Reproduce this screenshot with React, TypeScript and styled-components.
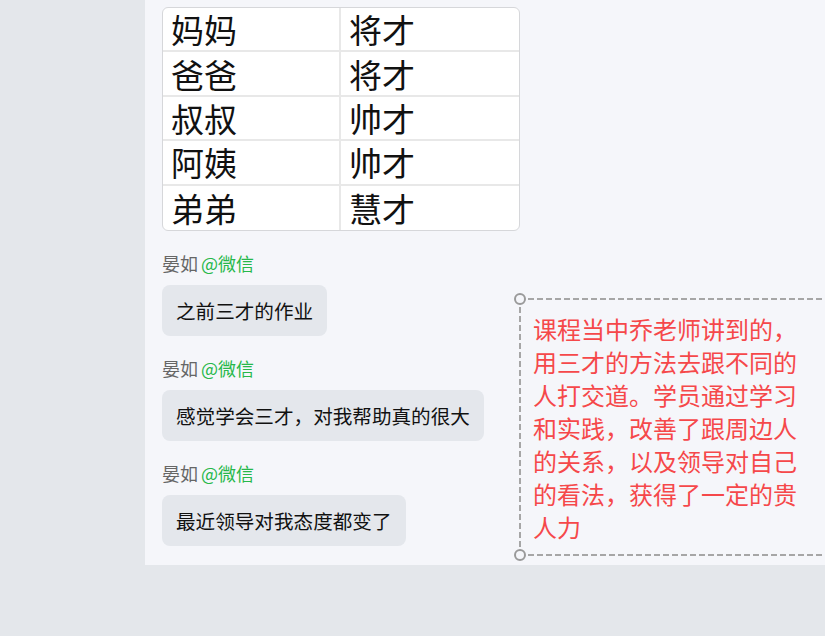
import React from "react"
import styled, { createGlobalStyle } from "styled-components"

const GlobalStyle = createGlobalStyle`
html, body {
  margin: 0;
  padding: 0;
  height: 100%;
  background: #e4e7eb;
  overflow: hidden;
}
#root {
  width: 825px;
  height: 636px;
  overflow: hidden;
}
* { box-sizing: border-box; }
`

const Page = styled.div`
width: 825px;
height: 636px;
overflow: hidden;
padding-left: 145px;
font-family: "Noto Sans CJK SC", "Noto Sans", sans-serif;
`

const Panel = styled.div`
position: relative;
width: 700px;
background: #f5f6fa;
padding: 7px 0 19px 17px;
`

const Sheet = styled.table`
width: 358px;
border-spacing: 0;
border: 1px solid #d6d7da;
border-radius: 6px;
background: #fff;
margin-bottom: 22px;
`

const Cell = styled.td<{ $last?: boolean; $right?: boolean }>`
width: 178px;
height: 44.4px;
padding: 0 0 0 8px;
font-size: 33px;
line-height: 40px;
color: #111;
border-bottom: ${(p) => (p.$last ? "none" : "2px solid #e8e8e8")};
border-right: ${(p) => (p.$right ? "none" : "2px solid #e8e8e8")};
vertical-align: middle;
`

const Thread = styled.div`
display: flex;
flex-direction: column;
align-items: flex-start;
gap: 22px;
`

const Message = styled.div``

const Sender = styled.div`
display: flex;
align-items: center;
gap: 3px;
height: 20px;
font-size: 18px;
line-height: 20px;
color: #666;
margin-bottom: 12px;
`

const Source = styled.span`
color: #27b84a;
`

const Bubble = styled.div`
display: inline-block;
background: #e4e7ec;
border-radius: 8px;
padding: 13px 14px;
font-size: 19.6px;
line-height: 25px;
color: #111;
`

const dash = "#a6a6a6"

const Note = styled.div`
position: absolute;
left: 374px;
top: 298px;
width: 330px;
height: 258px;
padding: 14px 0 0 14px;
background:
  repeating-linear-gradient(90deg, ${dash} 0 6px, transparent 6px 9px) top left / 100% 2px no-repeat,
  repeating-linear-gradient(90deg, ${dash} 0 6px, transparent 6px 9px) bottom left / 100% 2px no-repeat,
  repeating-linear-gradient(180deg, ${dash} 0 6px, transparent 6px 9px) top left / 2px 100% no-repeat;
`

const Handle = styled.span<{ $bottom?: boolean }>`
position: absolute;
left: -5px;
${(p) => (p.$bottom ? "bottom: -5px;" : "top: -5px;")}
width: 12px;
height: 12px;
border-radius: 50%;
border: 2.5px solid #9a9a9a;
background: #f5f6fa;
`

const NoteText = styled.p`
margin: 0;
width: 270px;
font-size: 24px;
line-height: 33px;
color: #f5484a;
`

const rows = [
  ["妈妈", "将才"],
  ["爸爸", "将才"],
  ["叔叔", "帅才"],
  ["阿姨", "帅才"],
  ["弟弟", "慧才"],
]

const messages = ["之前三才的作业", "感觉学会三才，对我帮助真的很大", "最近领导对我态度都变了"]

export default function App() {
  return (
    <>
      <GlobalStyle />
      <Page>
        <Panel>
          <Sheet>
            <tbody>
              {rows.map((r, i) => (
                <tr key={i}>
                  <Cell $last={i === rows.length - 1}>{r[0]}</Cell>
                  <Cell $last={i === rows.length - 1} $right>
                    {r[1]}
                  </Cell>
                </tr>
              ))}
            </tbody>
          </Sheet>
          <Thread>
            {messages.map((m, i) => (
              <Message key={i}>
                <Sender>
                  晏如<Source>@微信</Source>
                </Sender>
                <Bubble>{m}</Bubble>
              </Message>
            ))}
          </Thread>
          <Note>
            <Handle />
            <Handle $bottom />
            <NoteText>
              课程当中乔老师讲到的，用三才的方法去跟不同的人打交道。学员通过学习和实践，改善了跟周边人的关系，以及领导对自己的看法，获得了一定的贵人力
            </NoteText>
          </Note>
        </Panel>
      </Page>
    </>
  )
}
